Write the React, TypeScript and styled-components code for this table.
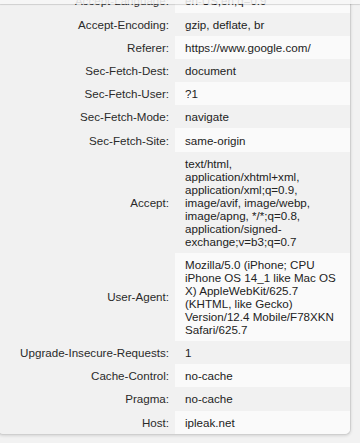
import React from "react";
import styled, { createGlobalStyle } from "styled-components";

const GlobalStyle = createGlobalStyle`
  html, body {
    margin: 0;
    padding: 0;
    background: #f2f2f2;
    overflow: hidden;
  }
  body {
    font-family: "Liberation Sans", Arial, sans-serif;
    color: #222;
  }
`;

const Page = styled.div`
  width: 360px;
  height: 443px;
  overflow: hidden;
  position: relative;
`;

const TopBar = styled.div`
  position: absolute;
  top: 0;
  left: 0;
  right: 0;
  height: 4px;
  background: rgba(246, 246, 246, 0.88);
  box-shadow: 0 1px 1px rgba(0, 0, 0, 0.14);
  z-index: 2;
`;

const Card = styled.div`
  margin-top: -10.7px;
  margin-left: -3px;
  width: 354px;
  box-sizing: border-box;
  background: #f1f1f1;
  border: 1px solid #cfcfcf;
  border-top: none;
  border-radius: 0 0 6px 6px;
  box-shadow: 0 1px 3px rgba(0, 0, 0, 0.12);
  overflow: hidden;
  display: grid;
  grid-template-columns: 177px 1fr;
`;

const Label = styled.div`
  text-align: right;
  padding: 5.1px 6px 5.1px 0;
  font-size: 11.6px;
  line-height: 13px;
  color: #2a2a2a;
  display: flex;
  align-items: center;
  justify-content: flex-end;
`;

const Value = styled.div<{ $light: boolean }>`
  background: ${(p) => (p.$light ? "#fafafa" : "#f1f1f1")};
  padding: 5.1px 10px 5.1px 10px;
  font-size: 11.6px;
  line-height: 13px;
  color: #222;
  word-wrap: break-word;
`;

const rows: [string, string][] = [
  ["Accept-Language", "en-US,en;q=0.9"],
  ["Accept-Encoding", "gzip, deflate, br"],
  ["Referer", "https://www.google.com/"],
  ["Sec-Fetch-Dest", "document"],
  ["Sec-Fetch-User", "?1"],
  ["Sec-Fetch-Mode", "navigate"],
  ["Sec-Fetch-Site", "same-origin"],
  [
    "Accept",
    "text/html, application/xhtml+xml, application/xml;q=0.9, image/avif, image/webp, image/apng, */*;q=0.8, application/signed-exchange;v=b3;q=0.7",
  ],
  [
    "User-Agent",
    "Mozilla/5.0 (iPhone; CPU iPhone OS 14_1 like Mac OS X) AppleWebKit/625.7 (KHTML, like Gecko) Version/12.4 Mobile/F78XKN Safari/625.7",
  ],
  ["Upgrade-Insecure-Requests", "1"],
  ["Cache-Control", "no-cache"],
  ["Pragma", "no-cache"],
  ["Host", "ipleak.net"],
];

export default function App() {
  return (
    <Page>
      <GlobalStyle />
      <TopBar />
      <Card>
        {rows.map(([k, v], i) => (
          <React.Fragment key={k}>
            <Label>{k}:</Label>
            <Value $light={i % 2 === 0}>{v}</Value>
          </React.Fragment>
        ))}
      </Card>
    </Page>
  );
}
